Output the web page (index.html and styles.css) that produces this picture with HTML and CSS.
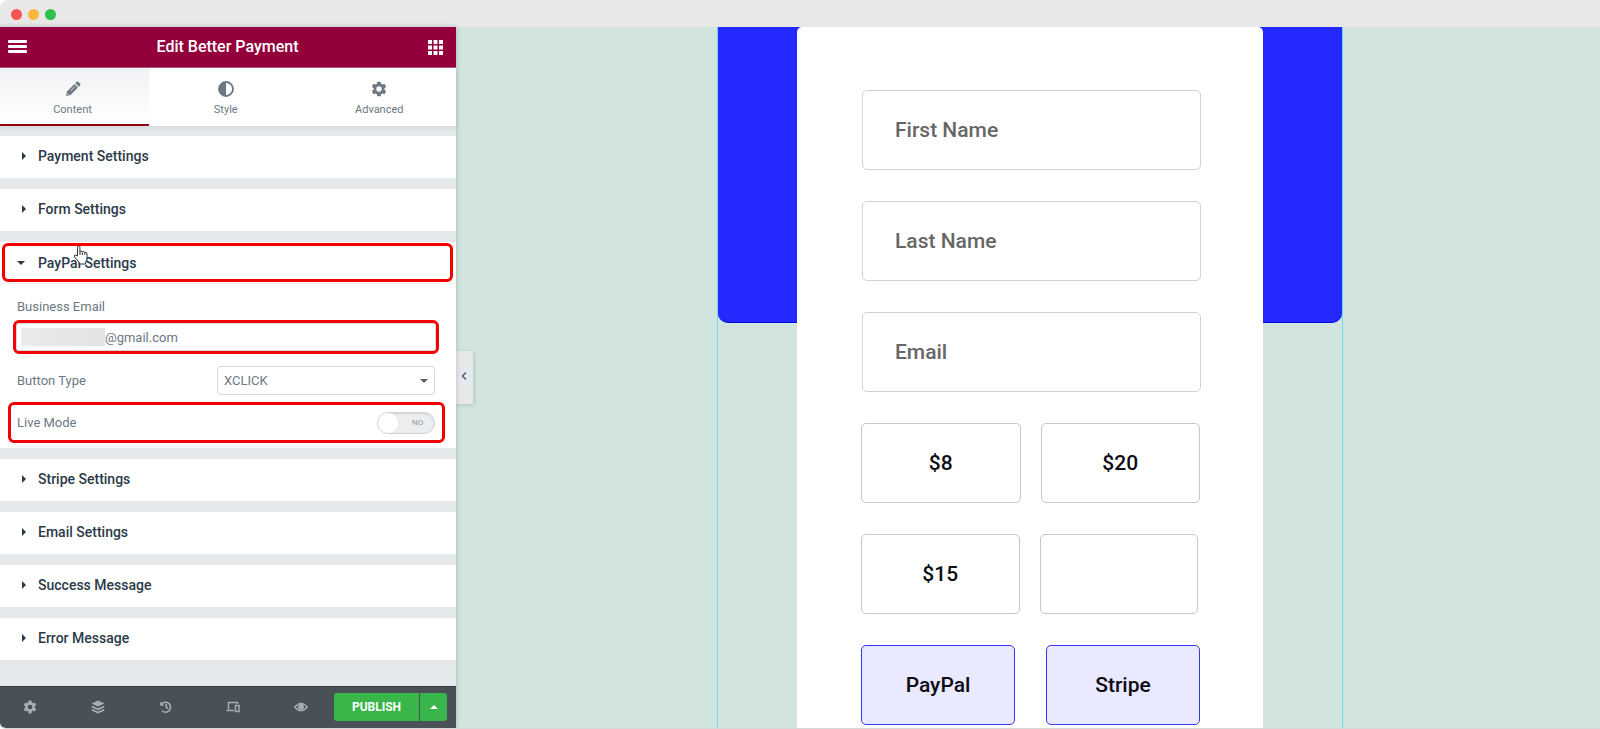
FILE: index.html
```
<!DOCTYPE html>
<html lang="en">
<head>
<meta charset="utf-8">
<title>Edit Better Payment</title>
<link rel="stylesheet" href="styles.css">
</head>
<body>
<div class="window">
	<div class="titlebar"><i class="dot red"></i><i class="dot yellow"></i><i class="dot green"></i></div>
	<div class="main">
		<div class="panel">
			<div class="panel-header">
				<button class="icon-btn" aria-label="Menu"><svg width="19" height="14" viewBox="0 0 19 14" fill="#fff"><rect y="0" width="19" height="3" rx="1"/><rect y="5" width="19" height="3" rx="1"/><rect y="10" width="19" height="3" rx="1"/></svg></button>
				<h1>Edit Better Payment</h1>
				<button class="icon-btn" aria-label="Widgets"><svg width="15" height="15" viewBox="0 0 15 15" fill="#fff"><path d="M0 0h4v4H0zM5.500 0h4v4h-4zM11 0h4v4h-4zM0 5.500h4v4H0zM5.500 5.500h4v4h-4zM11 5.500h4v4h-4zM0 11h4v4H0zM5.500 11h4v4h-4zM11 11h4v4h-4z"/></svg></button>
			</div>
			<div class="tabs">
				<button class="tab active">
					<svg width="16" height="16" viewBox="0 0 16 16"><path d="M1 15l1-4.500L9.500 3 13 6.500 5.500 14z" fill="#6d7882"/><path d="M10.300 2.200l1.400-1.400q.8-.6 1.600 0l1.900 1.900q.6.800 0 1.600l-1.400 1.400z" fill="#6d7882"/><path d="M5.500 10l4.500-4.500M2.300 12.600l1.200 1.200" stroke="#f4f5f7" stroke-width=".8"/></svg>
					<span>Content</span>
				</button>
				<button class="tab">
					<svg width="16" height="16" viewBox="0 0 16 16"><circle cx="8" cy="8" r="7" fill="none" stroke="#6d7882" stroke-width="1.800"/><path d="M8 1a7 7 0 0 0 0 14z" fill="#6d7882"/></svg>
					<span>Style</span>
				</button>
				<button class="tab">
					<svg width="16" height="16" viewBox="0 0 24 24"><use href="#gear"/></svg>
					<span>Advanced</span>
				</button>
			</div>
			<div class="sections">
				<button class="section"><i class="caret"></i>Payment Settings</button>
				<button class="section"><i class="caret"></i>Form Settings</button>
				<div class="section-open">
					<button class="section marked"><i class="caret open"></i>PayPal Settings</button>
					<svg class="cursor" width="16" height="20" viewBox="0 0 16 20"><path d="M4.500 11V2.200q0-1.200 1.200-1.200t1.200 1.200V7q0-1 1.200-1t1.300 1.200q.2-.8 1.200-.7t1.200 1.300q.2-.6 1-.5 1.200.1 1.200 1.500v4q0 2.500-1.500 4.500v1.700H6.300v-1.500L2 12.500q-1.200-1.500-.4-2.200.9-.8 2.900.7z" fill="#fff" stroke="#2b3440" stroke-width="1"/><path d="M7 7v3M9.400 7.500V10M11.800 8v2" stroke="#2b3440" stroke-width="1"/></svg>
					<div class="controls">
						<label class="label" for="email">Business Email</label>
						<div class="email marked">
							<span class="redacted"></span>
							<input id="email" type="text" value="@gmail.com">
						</div>
						<div class="row">
							<label class="label" for="type">Button Type</label>
							<div class="select"><select id="type"><option>XCLICK</option></select></div>
						</div>
						<div class="row live marked">
							<label class="label" for="live">Live Mode</label>
							<label class="switch"><input id="live" type="checkbox"><span class="knob"></span><span class="no">NO</span></label>
						</div>
					</div>
				</div>
				<button class="section"><i class="caret"></i>Stripe Settings</button>
				<button class="section"><i class="caret"></i>Email Settings</button>
				<button class="section"><i class="caret"></i>Success Message</button>
				<button class="section"><i class="caret"></i>Error Message</button>
			</div>
			<div class="footer">
				<div class="tools">
					<button class="tool" aria-label="Settings"><svg width="14" height="14" viewBox="0 0 24 24"><g id="gear"><path fill-rule="evenodd" d="M9.500 1h5l.6 3.200 2 1.200 3.100-1.100 2.500 4.300-2.500 2.200v2.400l2.500 2.200-2.500 4.300-3.100-1.100-2 1.200-.6 3.200h-5l-.6-3.200-2-1.200-3.100 1.100-2.500-4.300 2.500-2.200v-2.400L1.300 8.600l2.500-4.300 3.100 1.100 2-1.200zM12 8a4 4 0 1 0 0 8 4 4 0 0 0 0-8z"/></g></svg></button>
					<button class="tool" aria-label="Navigator"><svg width="14" height="14" viewBox="0 0 14 14"><path d="M7 .5l6.500 2.900L7 6.500.5 3.400z"/><path d="M.8 6.500L7 9.300l6.200-2.800M.8 9.700L7 12.500l6.200-2.800" fill="none" stroke="#a4afb7" stroke-width="1.800"/></svg></button>
					<button class="tool" aria-label="History"><svg width="14" height="14" viewBox="0 0 14 14"><path d="M2.500 4.300A5 5 0 1 1 3 10.700M7.300 4v3.300l2 1.400" fill="none" stroke="#a4afb7" stroke-width="1.600"/><path d="M1.200 1.500v4.300h4.300z"/></svg></button>
					<button class="tool" aria-label="Responsive mode"><svg width="14" height="14" viewBox="0 0 14 14"><path d="M2.500 9.500V2.500h9V4M.5 10.500h7.500M9.500 5.500h3.500v6H9.500z" fill="none" stroke="#a4afb7" stroke-width="1.500"/></svg></button>
					<button class="tool" aria-label="Preview"><svg width="14" height="14" viewBox="0 0 14 14"><path d="M.8 7Q7-.3 13.200 7 7 14.300.8 7z" fill="none" stroke="#a4afb7" stroke-width="1.300"/><circle cx="7" cy="6.700" r="3"/></svg></button>
				</div>
				<div class="publish"><button class="pub">PUBLISH</button><button class="pub-more" aria-label="Save options"><i class="up"></i></button></div>
			</div>
		</div>
		<div class="canvas">
			<button class="collapse" aria-label="Collapse panel"><svg width="6" height="8" viewBox="0 0 6 8"><path d="M5 .5L1.500 4 5 7.500" fill="none" stroke="#556068" stroke-width="1.500"/></svg></button>
			<div class="outline">
				<div class="blue"></div>
				<form class="card">
					<input class="field" type="text" placeholder="First Name" aria-label="First Name">
					<input class="field" type="text" placeholder="Last Name" aria-label="Last Name">
					<input class="field" type="text" placeholder="Email" aria-label="Email">
					<div class="pair"><button class="amount" type="button">$8</button><button class="amount" type="button">$20</button></div>
					<div class="pair custom"><button class="amount" type="button">$15</button><input class="amount" type="text" aria-label="Custom amount"></div>
					<div class="pair methods"><button class="amount" type="button">PayPal</button><button class="amount" type="button">Stripe</button></div>
				</form>
			</div>
		</div>
	</div>
</div>
</body>
</html>
```
FILE: styles.css
```
*{box-sizing:border-box;margin:0;padding:0;}
body{background:#fff;font-family:Roboto,"Liberation Sans",sans-serif;}
button,input,select{font-family:inherit;border:0;background:none;outline:0;}
button{cursor:pointer;}
svg{display:block;}
.window{height:100vh;display:flex;flex-direction:column;overflow:hidden;border-radius:8px 0 0 6px;border-bottom:1px solid #d5dad8;}
.titlebar{flex:none;height:27px;background:#e8e8e8;display:flex;align-items:center;gap:6px;padding:1px 0 0 11px;}
.dot{width:11px;height:11px;border-radius:50%;}
.red{background:#f95653;}
.yellow{background:#fbb73e;}
.green{background:#2fc14b;}
.main{flex:1;min-height:0;display:flex;}

/* panel */
.panel{flex:none;width:456px;display:flex;flex-direction:column;background:#e6e9ec;box-shadow:0 0 5px rgba(0,0,0,.2);position:relative;z-index:1;}
.panel-header{flex:none;height:41px;background:#93003c;border-bottom:1px solid #b0557b;display:flex;align-items:center;justify-content:space-between;padding:0 13px 0 8px;}
.panel-header h1{font-size:16px;font-weight:500;line-height:20px;color:#fff;}
.tabs{flex:none;height:58px;display:flex;background:#fff;box-shadow:0 2px 5px rgba(0,0,0,.08);}
.tab{flex:1;display:flex;flex-direction:column;align-items:center;gap:6px;padding-top:13px;font-size:11px;line-height:14px;color:#6d7882;fill:#6d7882;}
.tab.active{flex:none;width:149px;padding-right:4px;background:linear-gradient(#f1f2f5,#fff);border-bottom:2px solid #93000a;}
.sections{flex:1;display:flex;flex-direction:column;gap:11px;padding-top:10px;}
.section{flex:none;width:100%;height:42px;display:flex;align-items:center;padding:0 0 3px 22px;background:#fff;font-size:14px;font-weight:500;color:#2b3a48;text-align:left;}
.caret{border:4px solid transparent;border-left-color:#2b3a48;border-right-width:0;margin-right:12px;}
.caret.open{border:4px solid transparent;border-top-color:#2b3a48;border-bottom-width:0;margin-right:13px;}
.section-open{background:#fff;height:206px;position:relative;}
.marked{outline:3px solid #f30000;border-radius:3px;}
.section-open .section{width:auto;height:33px;margin:4px 6px 0 5px;padding:0 0 0 12px;min-width:445px;}
.cursor{position:absolute;left:73px;top:3px;}
.controls{margin-top:4px;border-top:1px solid #eef0f2;padding:14px 13px 0 11px;}
.label{font-size:13px;line-height:18px;color:#6d7882;}
.controls>.label{display:block;padding-left:6px;}
.email{height:28px;margin:7px 7px 0 5px;display:flex;align-items:center;border:1px solid #d5dadf;}
.redacted{width:84px;height:18px;margin-left:4px;background:linear-gradient(90deg,#ebebeb,#e2e2e2);}
.email input{flex:1;font-size:13px;color:#6d7882;}
.row{display:flex;align-items:center;justify-content:space-between;padding:0 8px 0 6px;margin-top:15px;}
.select{width:218px;position:relative;}
.select select{display:block;width:100%;height:29px;border:1px solid #d5dadf;border-radius:3px;padding:0 6px;font-size:13px;color:#6d7882;appearance:none;}
.select:after{content:"";position:absolute;right:7px;top:13px;border:4px solid transparent;border-top-color:#556068;border-bottom-width:0;}
.live{height:35px;margin-top:10px;margin-right:1px;padding-right:7px;}
.switch{width:58px;height:22px;display:flex;align-items:center;border:1px solid #d0d4d8;border-radius:11px;background:#ebedef;box-shadow:inset 0 1px 2px rgba(0,0,0,.12);}
.switch input{position:absolute;opacity:0;}
.knob{width:20px;height:20px;border-radius:50%;background:#fff;}
.no{margin-left:14px;font-size:8px;color:#8f989f;}
.footer{flex:none;height:42px;background:#495157;border-top:1px solid #353b40;display:flex;align-items:center;padding:0 9px 1px 0;border-bottom-left-radius:5px;}
.tools{flex:1;display:flex;justify-content:space-between;padding:0 26px 0 23px;fill:#a4afb7;}
.publish{display:flex;gap:1px;}
.publish button{height:28px;background:#39b54a;color:#fff;font-size:12px;font-weight:700;}
.publish .pub{width:85px;border-radius:3px 0 0 3px;}
.publish .pub-more{width:27px;border-radius:0 3px 3px 0;display:flex;align-items:center;justify-content:center;}
.up{border:4px solid transparent;border-bottom-color:#fff;border-top-width:0;}

/* preview */
.canvas{flex:1;min-width:0;background:#d1e4de;display:flex;justify-content:center;position:relative;overflow:hidden;padding-left:4px;}
.collapse{position:absolute;left:0;top:324px;width:17px;height:53px;background:#e6e9ec;box-shadow:1px 1px 4px rgba(0,0,0,.15);display:flex;align-items:center;justify-content:center;padding:0 2px 4px 0;}
.outline{width:626px;border:1px solid #71d7f7;border-width:0 1px;position:relative;display:flex;justify-content:center;}
.blue{position:absolute;left:0;right:0;top:0;height:296px;background:#2429ff;border-bottom:1px solid #0a0adf;border-radius:0 0 10px 10px;}
.card{position:relative;width:466px;background:#fff;border-radius:5px 5px 0 0;padding:63px 63px 0 64px;display:flex;flex-direction:column;gap:31px;}
.field{flex:none;height:80px;margin-left:1px;margin-right:-1px;padding:0 32px;border:1px solid #d3d3d6;border-radius:5px;font-size:21px;font-weight:500;}
.field::placeholder{color:#666;opacity:1;}
.pair{flex:none;display:flex;gap:20px;}
.amount{flex:1;min-width:0;height:80px;border:1px solid #c6c6ca;border-radius:5px;font-size:21px;font-weight:500;color:#0c0c14;}
.custom{padding-right:2px;}
.methods{gap:31px;}
.methods .amount{background:#e9e9ff;border-color:#3438f0;}
```
